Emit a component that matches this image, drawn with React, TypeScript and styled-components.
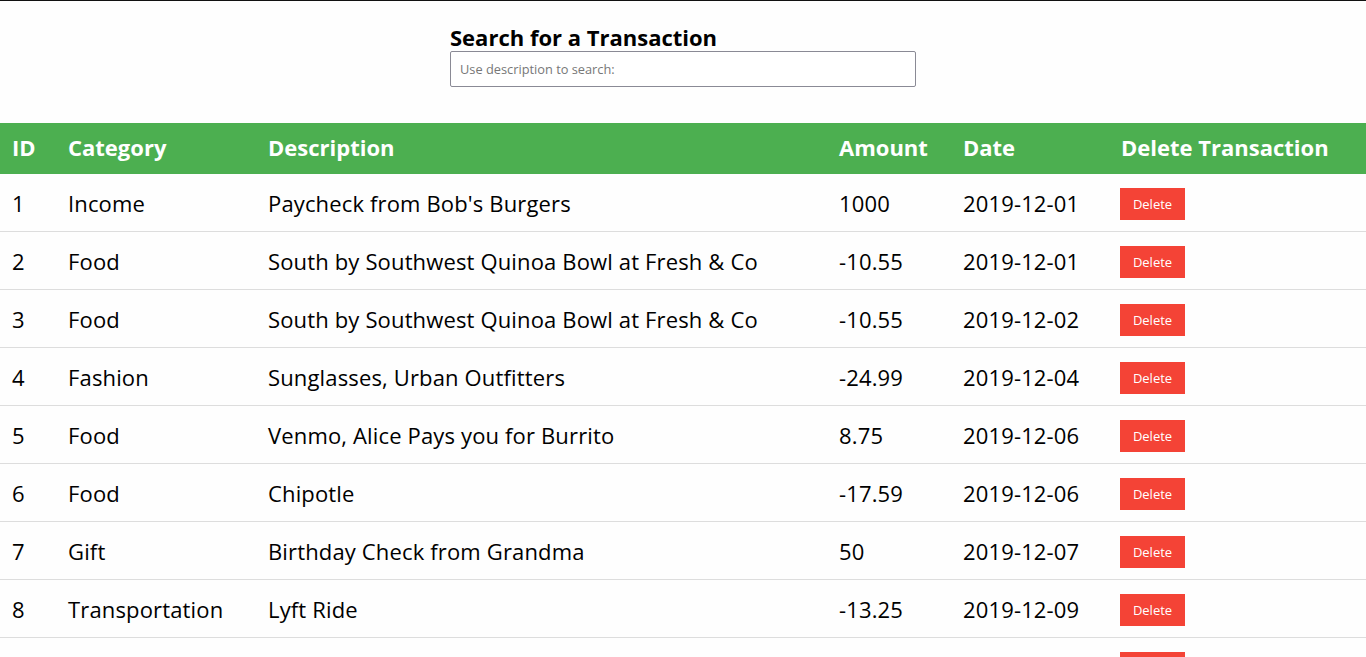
import React from "react";
import styled, { createGlobalStyle } from "styled-components";

const Global = createGlobalStyle`
  html, body { margin: 0; padding: 0; background: #fefefe; }
  body { font-family: "Open Sans", "Noto Sans", sans-serif; color: #000; }
`;

const Page = styled.div`
  border-top: 1px solid #111;
`;

const SearchBox = styled.div`
  width: 466px;
  margin: 0 auto;
  padding-top: 22px;
  padding-bottom: 36px;
`;

const Heading = styled.h2`
  margin: 0;
  font-size: 22px;
  font-weight: 700;
  line-height: 28px;
`;

const Input = styled.input`
  box-sizing: border-box;
  display: block;
  width: 100%;
  height: 36px;
  border: 1px solid #8a8a95;
  border-radius: 2px;
  padding: 0 9px;
  font-family: inherit;
  font-size: 12.8px;
  background: #fff;
  &::placeholder { color: #777; }
`;

const Table = styled.table`
  width: 100%;
  border-collapse: collapse;
  table-layout: fixed;
`;

const HeadCell = styled.th<{ w: number }>`
  box-sizing: border-box;
  width: ${(p) => p.w}px;
  background: #4caf50;
  color: #fff;
  text-align: left;
  font-size: 22px;
  font-weight: 700;
  height: 51px;
  padding: 0 0 3px 12px;
  white-space: nowrap;
`;

const Row = styled.tr`
  border-bottom: 1px solid #ddd;
`;

const Cell = styled.td`
  height: 57px;
  padding: 0 0 0 12px;
  font-size: 22px;
  letter-spacing: 0.15px;
  white-space: nowrap;
  vertical-align: middle;
`;

const DeleteButton = styled.button`
  width: 65px;
  height: 32px;
  background: #f44336;
  color: #fff;
  border: none;
  font-family: inherit;
  font-size: 13px;
  padding: 0;
  margin-left: -1px;
  cursor: pointer;
`;

const rows = [
  [1, "Income", "Paycheck from Bob's Burgers", "1000", "2019-12-01"],
  [2, "Food", "South by Southwest Quinoa Bowl at Fresh & Co", "-10.55", "2019-12-01"],
  [3, "Food", "South by Southwest Quinoa Bowl at Fresh & Co", "-10.55", "2019-12-02"],
  [4, "Fashion", "Sunglasses, Urban Outfitters", "-24.99", "2019-12-04"],
  [5, "Food", "Venmo, Alice Pays you for Burrito", "8.75", "2019-12-06"],
  [6, "Food", "Chipotle", "-17.59", "2019-12-06"],
  [7, "Gift", "Birthday Check from Grandma", "50", "2019-12-07"],
  [8, "Transportation", "Lyft Ride", "-13.25", "2019-12-09"],
  [9, "Food", "Chipotle", "-17.59", "2019-12-10"],
];

const cols: [string, number][] = [
  ["ID", 56],
  ["Category", 200],
  ["Description", 571],
  ["Amount", 124],
  ["Date", 158],
  ["Delete Transaction", 257],
];

export default function App() {
  return (
    <>
      <Global />
      <Page>
        <SearchBox>
          <Heading>Search for a Transaction</Heading>
          <Input placeholder="Use description to search:" />
        </SearchBox>
        <Table>
          <thead>
            <tr>
              {cols.map(([c, w]) => (
                <HeadCell key={c} w={w}>{c}</HeadCell>
              ))}
            </tr>
          </thead>
          <tbody>
            {rows.map((r) => (
              <Row key={r[0]}>
                <Cell>{r[0]}</Cell>
                <Cell>{r[1]}</Cell>
                <Cell>{r[2]}</Cell>
                <Cell>{r[3]}</Cell>
                <Cell>{r[4]}</Cell>
                <Cell>
                  <DeleteButton>Delete</DeleteButton>
                </Cell>
              </Row>
            ))}
          </tbody>
        </Table>
      </Page>
    </>
  );
}
